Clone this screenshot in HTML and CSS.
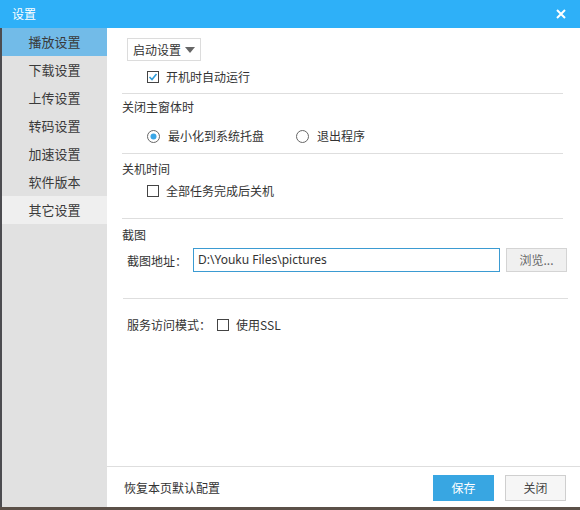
FILE: index.html
```html
<!DOCTYPE html>
<html>
<head>
<meta charset="utf-8">
<link rel="stylesheet" href="styles.css">
</head>
<body>
<div class="window">
  <div class="titlebar">
    <span class="title">设置</span>
    <svg class="close" width="10" height="10" viewBox="0 0 10 10"><path d="M1 1L9 9M9 1L1 9" stroke="#fff" stroke-width="2" fill="none"/></svg>
  </div>
  <div class="body">
    <div class="sidebar">
      <div class="nav active">播放设置</div>
      <div class="nav">下载设置</div>
      <div class="nav">上传设置</div>
      <div class="nav">转码设置</div>
      <div class="nav">加速设置</div>
      <div class="nav">软件版本</div>
      <div class="nav light">其它设置</div>
    </div>
    <div class="content">
      <div class="main">
        <div class="dropdown">启动设置<svg class="arrow" width="10" height="6" viewBox="0 0 10 6"><path d="M0 0H10L5 6Z" fill="#666"/></svg></div>
        <div class="row indent r1">
          <svg class="cb" width="12" height="12" viewBox="0 0 12 12"><rect x="0.5" y="0.5" width="11" height="11" fill="#fff" stroke="#444"/><path d="M2.5 6L5 8.5L9.5 3" stroke="#2f9bd8" stroke-width="1.6" fill="none"/></svg>
          <span>开机时自动运行</span>
        </div>
        <div class="sep s1"></div>

        <div class="row head h2">关闭主窗体时</div>
        <div class="row indent r2">
          <svg class="rb" width="13" height="13" viewBox="0 0 13 13"><circle cx="6.5" cy="6.5" r="6" fill="#fff" stroke="#666"/><circle cx="6.5" cy="6.5" r="3" fill="#3aa6e6"/></svg>
          <span class="opt1">最小化到系统托盘</span>
          <svg class="rb" width="13" height="13" viewBox="0 0 13 13"><circle cx="6.5" cy="6.5" r="6" fill="#fff" stroke="#666"/></svg>
          <span>退出程序</span>
        </div>
        <div class="sep s2"></div>

        <div class="row head h3">关机时间</div>
        <div class="row indent r3">
          <svg class="cb" width="12" height="12" viewBox="0 0 12 12"><rect x="0.5" y="0.5" width="11" height="11" fill="#fff" stroke="#444"/></svg>
          <span>全部任务完成后关机</span>
        </div>
        <div class="sep s3"></div>

        <div class="row head h4">截图</div>
        <div class="pathrow">
          <span class="label">截图地址：</span>
          <div class="input">D:\Youku Files\pictures</div>
          <div class="browse">浏览...</div>
        </div>
        <div class="sep s4 wide"></div>

        <div class="row r5">
          <span class="label2">服务访问模式：</span>
          <svg class="cb" width="12" height="12" viewBox="0 0 12 12"><rect x="0.5" y="0.5" width="11" height="11" fill="#fff" stroke="#444"/></svg>
          <span>使用SSL</span>
        </div>
      </div>
      <div class="footer">
        <span class="restore">恢复本页默认配置</span>
        <div class="btns">
          <div class="btn save">保存</div>
          <div class="btn closebtn">关闭</div>
        </div>
      </div>
    </div>
  </div>
</div>
</body>
</html>
```
FILE: styles.css
```css
html, body {
  margin: 0;
  padding: 0;
}
body {
  width: 580px;
  height: 510px;
  background: #5b5048;
  font-family: "Noto Sans CJK SC", "Noto Sans", sans-serif;
  font-size: 12px;
  color: #333;
  overflow: hidden;
}
.window {
  width: 580px;
  height: 507px;
  display: flex;
  flex-direction: column;
  background: #fff;
}
.titlebar {
  height: 28px;
  background: #2eb0f8;
  display: flex;
  align-items: center;
  justify-content: space-between;
  padding: 0 14px 0 12px;
}
.title {
  color: #fff;
  font-size: 12px;
  line-height: 28px;
}
.close {
  display: block;
  margin-top: -1px;
}
.body {
  flex: 1;
  display: flex;
}
.sidebar {
  width: 105px;
  border-left: 2px solid #4c4c50;
  background: #e1e1e1;
}
.nav {
  height: 28px;
  line-height: 28px;
  text-align: center;
  font-size: 13px;
  color: #3a3a3a;
}
.nav.active {
  background: #72bbe8;
}
.nav.light {
  background: #efefef;
}
.content {
  flex: 1;
  display: flex;
  flex-direction: column;
}
.main {
  flex: 1;
  padding: 10px 12px 0 15px;
}
.dropdown {
  margin-left: 5px;
  height: 21px;
  border: 1px solid #dcdcdc;
  display: flex;
  align-items: center;
  padding-left: 5px;
  width: 67px;
  font-size: 12px;
  color: #333;
}
.arrow {
  margin-left: 4px;
}
.row {
  height: 18px;
  line-height: 18px;
  display: flex;
  align-items: center;
}
.indent {
  padding-left: 25px;
}
.cb, .rb {
  display: block;
  flex: none;
}
.cb {
  margin-right: 7px;
}
.rb {
  margin-right: 8px;
}
.opt1 {
  margin-right: 32px;
}
.r1 { margin-top: 7px; }
.sep {
  height: 1px;
  background: #dedede;
  margin-right: 5px;
}
.sep.wide {
  margin-right: 0;
  margin-left: 1px;
}
.s1 { margin-top: 7px; }
.h2 { margin-top: 4px; }
.r2 { margin-top: 11px; }
.s2 { margin-top: 8px; }
.h3 { margin-top: 6px; }
.r3 { margin-top: 4px; }
.s3 { margin-top: 18px; }
.h4 { margin-top: 7px; }
.pathrow {
  margin-top: 4px;
  height: 24px;
  display: flex;
  align-items: center;
  padding-left: 5px;
}
.label {
  width: 66px;
  flex: none;
}
.input {
  width: 301px;
  height: 22px;
  border: 1px solid #3b9bd2;
  line-height: 22px;
  padding-left: 4px;
  font-family: "Noto Sans", "Open Sans", sans-serif;
  font-size: 12px;
  color: #333;
  flex: none;
}
.browse {
  margin-left: 6px;
  width: 59px;
  height: 22px;
  line-height: 22px;
  border: 1px solid #d4d4d4;
  background: #f0f0f0;
  text-align: center;
  color: #666;
  flex: none;
}
.s4 { margin-top: 26px; }
.r5 {
  margin-top: 17px;
  padding-left: 5px;
}
.label2 {
  margin-right: 6px;
}
.footer {
  height: 40px;
  border-top: 1px solid #dedede;
  display: flex;
  align-items: center;
  justify-content: space-between;
  padding: 0 14px 0 17px;
}
.restore {
  color: #333;
}
.btns {
  display: flex;
  gap: 11px;
}
.btn {
  width: 59px;
  height: 24px;
  line-height: 24px;
  text-align: center;
  font-size: 12px;
  margin-top: 2px;
}
.save {
  background: #38a6e2;
  border: 1px solid #38a6e2;
  color: #fff;
}
.closebtn {
  background: #f6f6f6;
  border: 1px solid #cfcfcf;
  color: #444;
}
```
